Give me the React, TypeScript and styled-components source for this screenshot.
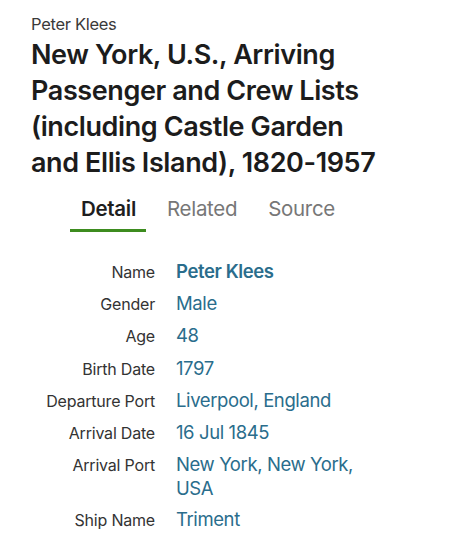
import styled, { createGlobalStyle } from "styled-components";

const Global = createGlobalStyle`
  html, body {
    margin: 0;
    padding: 0;
    background: #fff;
  }
  body {
    font-family: Inter, "Noto Sans", "Liberation Sans", sans-serif;
    color: #1d1d1d;
  }
`;

const Page = styled.div`
  padding: 13px 20px 0 31px;
`;

const Person = styled.div`
  font-size: 16.5px;
  line-height: 22px;
  color: #3a3a3a;
  letter-spacing: -0.3px;
`;

const Title = styled.h1`
  margin: 2px 0 0;
  font-size: 27px;
  line-height: 36px;
  font-weight: 600;
  letter-spacing: -0.4px;
  color: #1c1c1c;
  max-width: 345px;
`;

const NoWrap = styled.span`
  white-space: nowrap;
`;

const Tabs = styled.nav`
  display: flex;
  margin: 15px 0 0 39px;
`;

const Tab = styled.div<{ $active?: boolean }>`
  padding: 0 10px 7px 11px;
  margin-right: 10px;
  font-size: 20.5px;
  line-height: 26px;
  font-weight: ${(p) => (p.$active ? 600 : 400)};
  color: ${(p) => (p.$active ? "#1e1e1e" : "#777")};
  border-bottom: 3px solid ${(p) => (p.$active ? "#3d8c1f" : "transparent")};
  letter-spacing: -0.3px;
`;

const Facts = styled.dl`
  display: grid;
  grid-template-columns: 124px 180px;
  column-gap: 21px;
  row-gap: 7.2px;
  margin: 27px 0 0;
  align-items: baseline;
`;

const Label = styled.dt`
  text-align: right;
  font-size: 16px;
  line-height: 24px;
  color: #333;
  letter-spacing: -0.2px;
`;

const Value = styled.dd<{ $strong?: boolean }>`
  margin: 0;
  font-size: 18.5px;
  line-height: 24px;
  color: #2a6d8c;
  font-weight: ${(p) => (p.$strong ? 600 : 400)};
  letter-spacing: -0.4px;
`;

const facts: [string, string][] = [
  ["Name", "Peter Klees"],
  ["Gender", "Male"],
  ["Age", "48"],
  ["Birth Date", "1797"],
  ["Departure Port", "Liverpool, England"],
  ["Arrival Date", "16 Jul 1845"],
  ["Arrival Port", "New York, New York, USA"],
  ["Ship Name", "Triment"],
];

export default function App() {
  return (
    <>
      <Global />
      <Page>
        <Person>Peter Klees</Person>
        <Title>
          New York, U.S., Arriving Passenger and Crew Lists (including Castle
          Garden and Ellis Island), <NoWrap>1820-1957</NoWrap>
        </Title>
        <Tabs>
          <Tab $active>Detail</Tab>
          <Tab>Related</Tab>
          <Tab>Source</Tab>
        </Tabs>
        <Facts>
          {facts.map(([k, v], i) => (
            <>
              <Label key={k}>{k}</Label>
              <Value key={k + "v"} $strong={i === 0}>
                {v}
              </Value>
            </>
          ))}
        </Facts>
      </Page>
    </>
  );
}
